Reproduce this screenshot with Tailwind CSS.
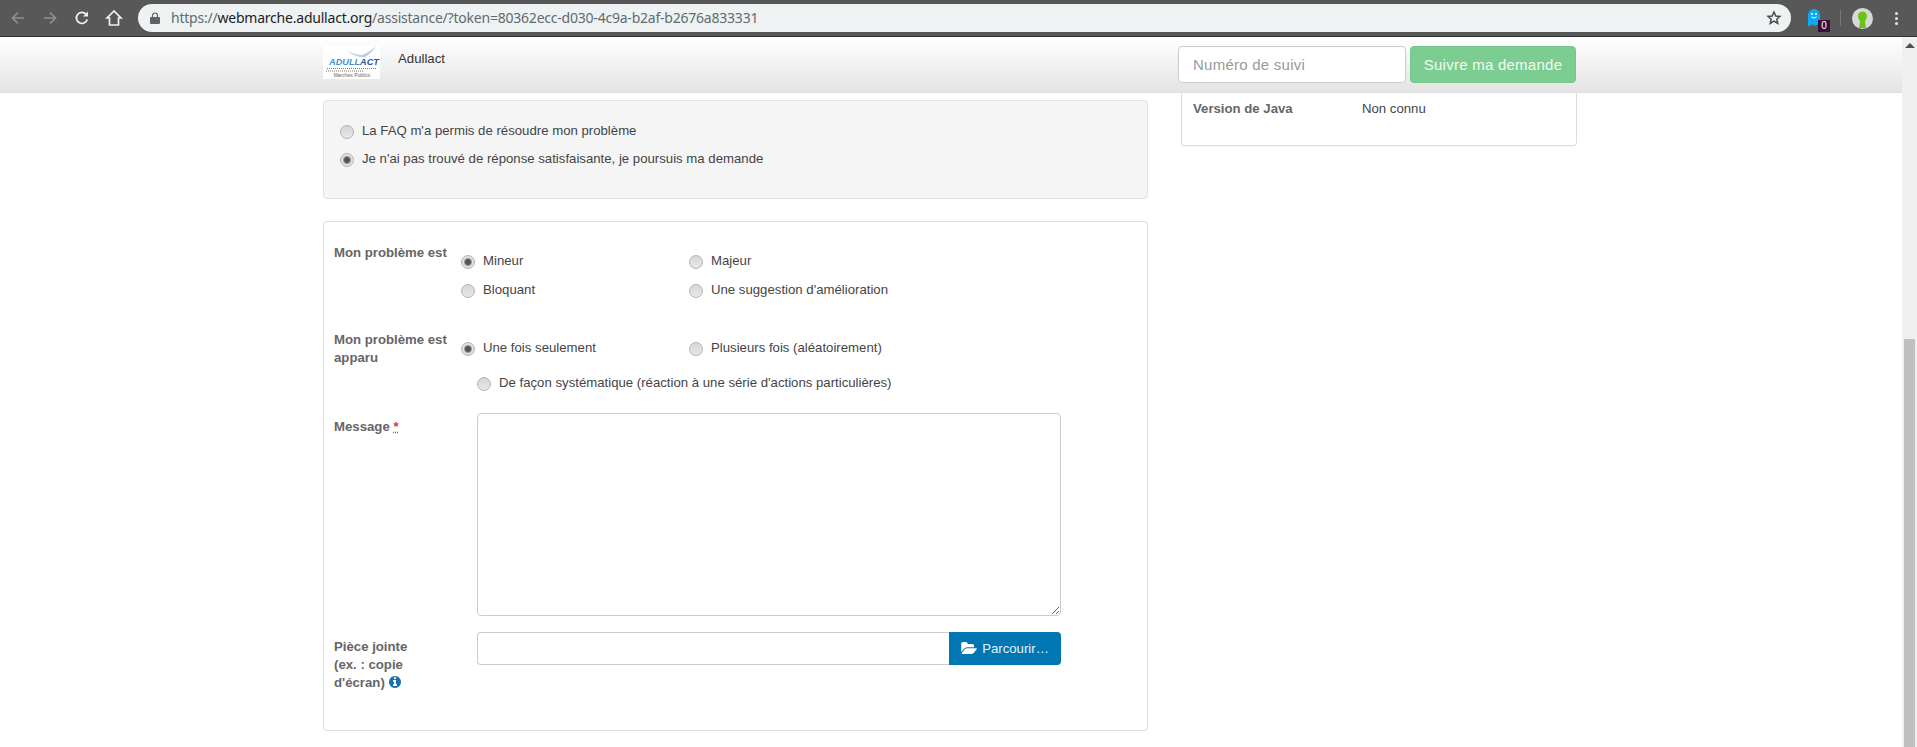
<!DOCTYPE html>
<html lang="fr">

<head>
    <meta charset="UTF-8">
    <title>Assistance - Adullact</title>
    <script src="https://cdn.jsdelivr.net/npm/@tailwindcss/browser@4"></script>
</head>

<body class="h-screen overflow-hidden flex flex-col bg-white font-['Liberation_Sans',sans-serif] text-[13.2px] leading-[18px] text-[#444]">

    <!-- browser toolbar -->
    <header class="h-[37px] shrink-0 flex items-start bg-[#585858] border-b border-[#333] pl-[2px] pt-[4px]">
        <div class="w-[32px] h-[28px] flex items-center justify-center">
            <svg width="16" height="16" viewBox="0 0 16 16" fill="none" stroke="#909090" stroke-width="1.7"><path d="M14 8H2.500M8 2.500 2.500 8 8 13.500" /></svg>
        </div>
        <div class="w-[32px] h-[28px] flex items-center justify-center">
            <svg width="16" height="16" viewBox="0 0 16 16" fill="none" stroke="#909090" stroke-width="1.7"><path d="M2 8h11.500M8 2.500 13.500 8 8 13.500" /></svg>
        </div>
        <div class="w-[32px] h-[28px] flex items-center justify-center">
            <svg width="16" height="16" viewBox="0 0 16 16" fill="none" stroke="#f0f0f0" stroke-width="1.8"><path d="M13.200 9.500A5.500 5.500 0 1 1 12 4.200" /><path d="M14 1.500V6.500H9" fill="#f0f0f0" stroke="none" /></svg>
        </div>
        <div class="w-[32px] h-[28px] flex items-center justify-center">
            <svg width="18" height="18" viewBox="0 0 18 18" fill="none" stroke="#f0f0f0" stroke-width="1.7"><path d="M9 2 2 9h2.500v7h9V9H16Z" /></svg>
        </div>
        <div class="flex-1 ml-[8px] h-[28px] rounded-l-[14px] rounded-r-[14px] bg-[#eff2f3] flex items-center pl-[12px] pr-[9px]">
            <svg width="10" height="12" viewBox="0 0 10 12" fill="#5f6368"><path d="M1 5h8a1 1 0 0 1 1 1v5a1 1 0 0 1-1 1H1a1 1 0 0 1-1-1V6a1 1 0 0 1 1-1Z" /><path d="M2.500 5V3.500a2.500 2.500 0 0 1 5 0V5" fill="none" stroke="#5f6368" stroke-width="1.2" /></svg>
            <p class="ml-[11px] flex-1 font-['Noto_Sans',sans-serif] text-[14px] tracking-[-0.22px] text-[#5f6b70] whitespace-nowrap">https://<span class="text-[#1c2226]">webmarche.adullact.org</span>/assistance/?token=80362ecc-d030-4c9a-b2af-b2676a833331</p>
            <svg width="16" height="16" viewBox="0 0 24 24" fill="none" stroke="#4a4a4a" stroke-width="2.2"><path d="m12 3 2.700 6 6.300.6-4.800 4.200 1.500 6.400L12 16.800l-5.700 3.400 1.500-6.400L3 9.600 9.300 9Z" /></svg>
        </div>
        <div class="w-[126px] h-[28px] relative flex items-center shrink-0">
            <svg class="ml-[16px]" width="16" height="20" viewBox="0 0 16 20" fill="#0fa8f0"><path d="M1 18V7a6 6 0 0 1 12 0v11l-2.500-1.500L8 18l-2.500-1.500L3 18Z" /><circle cx="5" cy="6" r="1" fill="#fff" /><circle cx="9" cy="6" r="1" fill="#fff" /><path d="M4.500 9q2.500 2 5 0" stroke="#fff" fill="none" /></svg>
            <span class="absolute left-[27px] top-[16px] w-[12px] h-[12px] bg-[#3a0f3f] text-white text-[10px] leading-[12px] text-center">0</span>
            <div class="ml-[17px] w-px h-[16px] bg-[#777]"></div>
            <svg class="ml-[11px]" width="21" height="21" viewBox="0 0 21 21"><circle cx="10.500" cy="10.500" r="10.500" fill="#d8d8d8" /><path d="M6 8a4.500 4.500 0 0 1 9 0c0 3-2 4-2 6l1 6H7l1-6c0-2-2-3-2-6Z" fill="#6cc417" /></svg>
            <div class="ml-[22px] flex flex-col gap-[2px]">
                <span class="w-[3px] h-[3px] rounded-full bg-[#e8e8e8]"></span>
                <span class="w-[3px] h-[3px] rounded-full bg-[#e8e8e8]"></span>
                <span class="w-[3px] h-[3px] rounded-full bg-[#e8e8e8]"></span>
            </div>
        </div>
    </header>

    <div class="flex-1 flex min-h-0">
        <div class="flex-1 min-w-0">

            <!-- navbar -->
            <nav class="h-[56px] flex items-start bg-gradient-to-b from-white to-[#e4e4e4] border-b border-[#e0e0e0] pl-[323px] pt-[9px]">
                <svg width="57" height="33" viewBox="0 0 57 33" class="bg-white">
                    <path d="M24 5q9 4 15 4 8-3 14-9-4 7-11 11-8 1-18-6Z" fill="#b5cfe8" />
                    <text x="6" y="19" textLength="50" lengthAdjust="spacingAndGlyphs" font-family="Liberation Sans" font-size="9.500" font-style="italic" font-weight="bold" fill="#4a8fcb">ADULL<tspan fill="#1d5c9c">ACT</tspan></text>
                    <path d="M4 22.500h50M3 25h38" stroke="#777" stroke-dasharray="1 1" />
                    <text x="29" y="31" text-anchor="middle" font-family="Liberation Sans" font-size="5" fill="#666">Marchés Publics</text>
                </svg>
                <a class="ml-[18px] text-[#333] mt-[4px]">Adullact</a>
                <div class="ml-auto mr-[326px] flex gap-[4px]">
                    <input type="text" placeholder="Numéro de suivi" class="w-[228px] h-[37px] px-[14px] bg-white border border-[#ccc] rounded-[4px] text-[15px] tracking-[0.25px] placeholder:text-[#999]">
                    <button class="w-[166px] h-[37px] bg-[#7bcd91] border border-[#74c78a] rounded-[4px] text-[15px] tracking-[0.25px] text-white/90">Suivre ma demande</button>
                </div>
            </nav>

            <main class="flex gap-[33px] pl-[323px]">
                <section class="w-[825px] shrink-0 pt-[7px]">
                    <div class="h-[99px] bg-[#f5f5f5] border border-[#e3e3e3] rounded-[4px] pl-[16px] pt-[16px]">
                        <label class="h-[28px] flex items-center gap-[8px]">
                            <input type="radio" name="faq" class="appearance-none w-[14px] h-[14px] mt-[2px] rounded-full border border-[#b4b4b4] bg-gradient-to-b from-[#d6d6d6] to-[#e8e8e8]">
                            <span>La FAQ m'a permis de résoudre mon problème</span>
                        </label>
                        <label class="h-[28px] flex items-center gap-[8px]">
                            <input type="radio" name="faq" checked class="appearance-none w-[14px] h-[14px] mt-[2px] rounded-full border border-[#b4b4b4] bg-[radial-gradient(circle,#555_0,#555_2.5px,#e0e0e0_4.5px)]">
                            <span>Je n'ai pas trouvé de réponse satisfaisante, je poursuis ma demande</span>
                        </label>
                    </div>

                    <form class="mt-[22px] border border-[#ddd] rounded-[4px] pl-[10px] pt-[22px] pb-[38px]">
                        <div class="flex">
                            <p class="w-[127px] shrink-0 font-bold text-[#666]">Mon problème est</p>
                            <div class="grid grid-cols-[228px_228px] mt-[2px]">
                                <label class="h-[29px] flex items-center gap-[8px]">
                                    <input type="radio" name="gravite" checked class="appearance-none w-[14px] h-[14px] mt-[2px] rounded-full border border-[#b4b4b4] bg-[radial-gradient(circle,#555_0,#555_2.5px,#e0e0e0_4.5px)]">
                                    <span>Mineur</span>
                                </label>
                                <label class="h-[29px] flex items-center gap-[8px]">
                                    <input type="radio" name="gravite" class="appearance-none w-[14px] h-[14px] mt-[2px] rounded-full border border-[#b4b4b4] bg-gradient-to-b from-[#d6d6d6] to-[#e8e8e8]">
                                    <span>Majeur</span>
                                </label>
                                <label class="h-[29px] flex items-center gap-[8px]">
                                    <input type="radio" name="gravite" class="appearance-none w-[14px] h-[14px] mt-[2px] rounded-full border border-[#b4b4b4] bg-gradient-to-b from-[#d6d6d6] to-[#e8e8e8]">
                                    <span>Bloquant</span>
                                </label>
                                <label class="h-[29px] flex items-center gap-[8px]">
                                    <input type="radio" name="gravite" class="appearance-none w-[14px] h-[14px] mt-[2px] rounded-full border border-[#b4b4b4] bg-gradient-to-b from-[#d6d6d6] to-[#e8e8e8]">
                                    <span>Une suggestion d'amélioration</span>
                                </label>
                            </div>
                        </div>

                        <div class="flex mt-[27px]">
                            <p class="w-[127px] shrink-0 font-bold text-[#666]">Mon problème est<br>apparu</p>
                            <div class="mt-[3px]">
                                <div class="grid grid-cols-[228px_228px]">
                                    <label class="h-[28px] flex items-center gap-[8px]">
                                        <input type="radio" name="frequence" checked class="appearance-none w-[14px] h-[14px] mt-[2px] rounded-full border border-[#b4b4b4] bg-[radial-gradient(circle,#555_0,#555_2.5px,#e0e0e0_4.5px)]">
                                        <span>Une fois seulement</span>
                                    </label>
                                    <label class="h-[28px] flex items-center gap-[8px]">
                                        <input type="radio" name="frequence" class="appearance-none w-[14px] h-[14px] mt-[2px] rounded-full border border-[#b4b4b4] bg-gradient-to-b from-[#d6d6d6] to-[#e8e8e8]">
                                        <span>Plusieurs fois (aléatoirement)</span>
                                    </label>
                                </div>
                                <label class="h-[28px] mt-[7px] ml-[16px] flex items-center gap-[8px]">
                                    <input type="radio" name="frequence" class="appearance-none w-[14px] h-[14px] mt-[2px] rounded-full border border-[#b4b4b4] bg-gradient-to-b from-[#d6d6d6] to-[#e8e8e8]">
                                    <span>De façon systématique (réaction à une série d'actions particulières)</span>
                                </label>
                            </div>
                        </div>

                        <div class="flex mt-[16px]">
                            <p class="w-[143px] shrink-0 pt-[5px] font-bold text-[#666]">Message <abbr title="obligatoire" class="text-[#e8313a] underline decoration-dotted">*</abbr></p>
                            <textarea class="block w-[584px] h-[203px] border border-[#ccc] rounded-[4px]"></textarea>
                        </div>

                        <div class="flex mt-[16px]">
                            <p class="w-[143px] shrink-0 pt-[6px] font-bold text-[#666]">Pièce jointe<br>(ex. : copie<br>d'écran)
                                <svg class="inline-block align-[-2px]" width="14" height="14" viewBox="0 0 1792 1792" fill="#1a6fb0"><path d="M1152 1376v-160q0-14-9-23t-23-9h-96v-512q0-14-9-23t-23-9h-320q-14 0-23 9t-9 23v160q0 14 9 23t23 9h96v320h-96q-14 0-23 9t-9 23v160q0 14 9 23t23 9h448q14 0 23-9t9-23zm-128-896v-160q0-14-9-23t-23-9h-192q-14 0-23 9t-9 23v160q0 14 9 23t23 9h192q14 0 23-9t9-23zm640 416q0 209-103 385.500t-279.500 279.500-385.500 103-385.500-103-279.500-279.500-103-385.500 103-385.500 279.500-279.500 385.500-103 385.500 103 279.500 279.500 103 385.500z" /></svg>
                            </p>
                            <div class="w-[584px] h-[33px] flex">
                                <div class="flex-1 border border-[#ccc] border-r-0 rounded-l-[4px]"></div>
                                <button type="button" class="w-[112px] flex items-center justify-center gap-[4px] bg-[#0077b3] rounded-r-[4px] text-[#e6f3fa]">
                                    <svg width="17" height="15" viewBox="0 0 1920 1792" fill="#fff"><path d="M1845 931q0 35-53 93l-336 396q-43 51-120.500 86.500t-143.500 35.500h-1088q-34 0-60.500-13t-26.500-43q0-35 53-93l336-396q43-51 120.500-86.500t143.500-35.500h1088q34 0 60.500 13t26.500 43zm-343-344v160h-832q-94 0-197 47.500t-164 119.500l-337 396-5 6q0-4-.5-12.500t-.5-12.500v-960q0-92 66-158t158-66h320q92 0 158 66t66 158v32h544q92 0 158 66t66 158z" /></svg>
                                    <span>Parcourir…</span>
                                </button>
                            </div>
                        </div>
                    </form>
                </section>

                <!-- right panel, top part is under the navbar -->
                <aside class="w-[396px] h-[53px] border border-t-0 border-[#ddd] rounded-b-[4px] shadow-[0_1px_1px_rgba(0,0,0,0.05)] pl-[11px] pt-[7px] flex">
                    <span class="w-[169px] font-bold text-[#666]">Version de Java</span>
                    <span>Non connu</span>
                </aside>
            </main>
        </div>

        <!-- scrollbar -->
        <div class="w-[15px] shrink-0 bg-[#f0f0f0] flex flex-col items-center pt-[6px]">
            <div class="w-0 h-0 border-x-[5px] border-x-transparent border-b-[5px] border-b-[#505050]"></div>
            <div class="w-[11px] flex-1 mt-[291px] bg-[#c0c0c0]"></div>
        </div>
    </div>
</body>

</html>
